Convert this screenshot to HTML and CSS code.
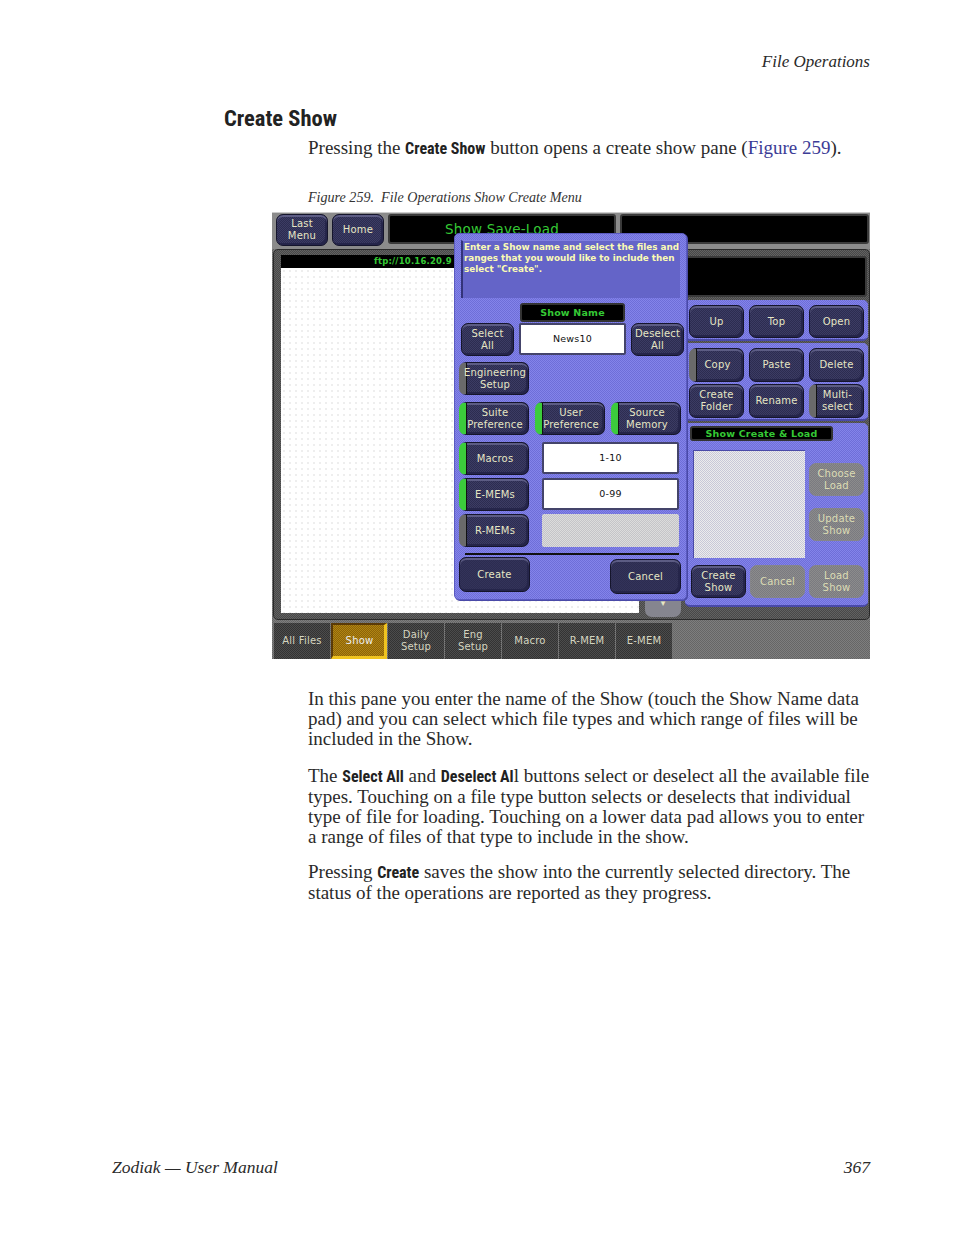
FILE: index.html
```html
<!DOCTYPE html>
<html lang="en">
<head>
<meta charset="utf-8">
<title>Create Show</title>
<link rel="stylesheet" href="styles.css">
</head>
<body>
<div class="page">
  <header class="running">File Operations</header>
  <h1>Create Show</h1>
  <p class="intro">Pressing the <b>Create Show</b> button opens a create show pane (<a>Figure 259</a>).</p>
  <p class="caption">Figure 259.&nbsp; File Operations Show Create Menu</p>

  <div class="shot">
    <div class="topbar">
      <div class="btn b-top">Last<br>Menu</div>
      <div class="btn b-home">Home</div>
      <div class="blackbox title">Show Save-Load</div>
      <div class="blackbox spare"></div>
    </div>

    <div class="main">
      <div class="files">
        <div class="path">ftp://10.16.20.9</div>
        <div class="list"></div>
      </div>
      <div class="side">
        <div class="blackbox status"></div>
        <div class="panel p-nav">
          <div class="btn b-r">Up</div>
          <div class="btn b-r">Top</div>
          <div class="btn b-r">Open</div>
        </div>
        <div class="panel p-ops">
          <div class="btn b-r lamp-grey">Copy</div>
          <div class="btn b-r">Paste</div>
          <div class="btn b-r">Delete</div>
          <div class="btn b-r">Create<br>Folder</div>
          <div class="btn b-r">Rename</div>
          <div class="btn b-r lamp-grey">Multi-<br>select</div>
        </div>
        <div class="panel p-show">
          <div class="tag tag-wide">Show Create &amp; Load</div>
          <div class="show-body">
            <div class="showlist"></div>
            <div class="show-actions">
              <div class="btn b-r off">Choose<br>Load</div>
              <div class="btn b-r off">Update<br>Show</div>
            </div>
          </div>
          <div class="show-foot">
            <div class="btn b-r">Create<br>Show</div>
            <div class="btn b-r off">Cancel</div>
            <div class="btn b-r off">Load<br>Show</div>
          </div>
        </div>
      </div>
      <div class="scroll-down">&#9662;</div>
    </div>

    <div class="tabs">
      <div class="tab">All Files</div>
      <div class="tab tab-on">Show</div>
      <div class="tab">Daily<br>Setup</div>
      <div class="tab">Eng<br>Setup</div>
      <div class="tab">Macro</div>
      <div class="tab">R-MEM</div>
      <div class="tab">E-MEM</div>
    </div>

    <div class="dialog">
      <div class="message">Enter a Show name and select the files and<br>ranges that you would like to include then<br>select "Create".</div>
      <div class="tag tag-name">Show Name</div>
      <div class="row r-name">
        <div class="btn b-sel">Select<br>All</div>
        <div class="field f-name">News10</div>
        <div class="btn b-sel">Deselect<br>All</div>
      </div>
      <div class="row r-eng">
        <div class="btn b-d lamp-grey">Engineering<br>Setup</div>
      </div>
      <div class="row r-pref">
        <div class="btn b-d lamp-green">Suite<br>Preference</div>
        <div class="btn b-d lamp-green">User<br>Preference</div>
        <div class="btn b-d lamp-green">Source<br>Memory</div>
      </div>
      <div class="row r-range r-macros">
        <div class="btn b-d lamp-green">Macros</div>
        <div class="field f-range">1-10</div>
      </div>
      <div class="row r-range">
        <div class="btn b-d lamp-green">E-MEMs</div>
        <div class="field f-range">0-99</div>
      </div>
      <div class="row r-range">
        <div class="btn b-d lamp-grey">R-MEMs</div>
        <div class="field f-range f-off"></div>
      </div>
      <div class="rule"></div>
      <div class="row r-foot">
        <div class="btn b-foot">Create</div>
        <div class="btn b-foot b-cancel">Cancel</div>
      </div>
    </div>
  </div>

  <div class="copy">
    <p>In this pane you enter the name of the Show (touch the Show Name data<br>pad) and you can select which file types and which range of files will be<br>included in the Show.</p>
    <p>The <b>Select All</b> and <b>Deselect Al</b>l buttons select or deselect all the available file<br>types. Touching on a file type button selects or deselects that individual<br>type of file for loading. Touching on a lower data pad allows you to enter<br>a range of files of that type to include in the show.</p>
    <p>Pressing <b>Create</b> saves the show into the currently selected directory. The<br>status of the operations are reported as they progress.</p>
  </div>

  <footer class="foot">
    <span>Zodiak — User Manual</span>
    <span>367</span>
  </footer>
</div>
</body>
</html>
```
FILE: styles.css
```css
* { box-sizing: border-box; }
html, body { margin: 0; background: #fff; }
.page {
  width: 954px; height: 1235px; padding: 52px 84px 0 112px;
  display: flex; flex-direction: column;
  font-family: "Liberation Serif", serif; color: #2a2a2a;
  font-size: 19px; line-height: 20px; white-space: nowrap;
}
.page b {
  font-family: "Roboto", "Liberation Sans", sans-serif; font-stretch: 75%;
  font-weight: 700; font-size: 16px; color: #222;
}
.running { text-align: right; font-style: italic; font-size: 17px; }
h1 {
  margin: 33px 0 0 112px; font: 700 22.5px/26px "Roboto", "Liberation Sans", sans-serif;
  font-stretch: 75%; color: #222;
}
.intro { margin: 7px 0 0 196px; }
.intro a { color: #3c3c96; }
.caption { margin: 29px 0 0 196px; font-style: italic; font-size: 14.1px; line-height: 18px; color: #333; }

/* screenshot */
.shot {
  position: relative; width: 598px; height: 447px; margin: 6px 0 0 160px;
  background-color: #7e7e7e;
  background-image: conic-gradient(#666 25%, transparent 0 50%, #666 0 75%, transparent 0);
  background-size: 2px 2px;
  font-family: "DejaVu Sans", sans-serif; font-size: 10px; line-height: 12px;
  color: #e6e6c4; letter-spacing: .2px;
  border-top: 1px solid #ccc;
}
.btn {
  display: flex; align-items: center; justify-content: center; text-align: center;
  background-color: #3c3c64;
  background-image: conic-gradient(#2c2c50 25%, transparent 0 50%, #2c2c50 0 75%, transparent 0);
  background-size: 2px 2px;
  border: 1px solid #15152c; border-radius: 7px;
  box-shadow: inset 0 2px 0 #5c5c84, inset -2px -2px 0 #25254a;
}
.off {
  background-color: #8c8c8c; border-color: #85858a; box-shadow: none; color: #dcdcb4;
  background-image: conic-gradient(#7a7a80 25%, transparent 0 50%, #7a7a80 0 75%, transparent 0);
}
.lamp-green, .lamp-grey {
  padding-right: 4px;
  box-shadow: inset 1px 0 0 #111, inset 0 2px 0 #5c5c84, inset -2px -2px 0 #25254a;
}
.lamp-green { border-left: 7px solid #3ccb3c; }
.lamp-grey { border-left: 7px solid #6a6a6a; }

.topbar { display: flex; height: 36px; padding: 1px 0 0 4px; background: #8b8b8b; }
.b-top { width: 52px; height: 32px; }
.b-home { width: 52px; height: 32px; margin-left: 4px; }
.blackbox { background: #000; border: 2px solid #3a3a3a; border-radius: 3px; }
.title {
  width: 228px; height: 30px; margin-left: 4px; color: #35c935;
  font-size: 13.5px; text-align: center; padding-top: 5px; line-height: 16px;
}
.spare { width: 249px; height: 30px; margin-left: 4px; }

.main {
  position: relative; display: flex; height: 371px; margin-left: 1px;
  background-color: #626262;
  background-image: conic-gradient(#484848 25%, transparent 0 50%, #484848 0 75%, transparent 0);
  background-size: 2px 2px;
  border-radius: 5px; border: 1px solid #2a2a2a;
  padding: 5px 0 0 7px;
}
.files { width: 358px; height: 358px; }
.path {
  height: 13px; background: #000; color: #35c935; font-weight: 700; font-size: 8.5px; line-height: 13px;
  padding-left: 93px;
}
.list {
  height: 345px; background-color: #fff;
  background-image: radial-gradient(#eeeeee .9px, transparent 1px);
  background-size: 6px 6px;
}
.side { width: 183px; margin-left: 46px; display: flex; flex-direction: column; margin-top: 1px; }
.status { height: 41px; width: 182px; }
.panel, .dialog {
  background-color: #8484ea;
  background-image: conic-gradient(#6e6ed8 25%, transparent 0 50%, #6e6ed8 0 75%, transparent 0);
  background-size: 2px 2px;
}
.panel { border-radius: 5px; border-bottom: 2px solid #4a4aa8; }
.b-r { width: 55px; height: 33px; }
.p-nav {
  height: 41px; margin-top: 3px; padding: 5px 5px 0 4px;
  display: grid; grid-template-columns: repeat(3, 55px); column-gap: 5px;
}
.p-ops {
  height: 78px; margin-top: 2px; padding: 5px 5px 0 4px;
  display: grid; grid-template-columns: repeat(3, 55px); column-gap: 5px; row-gap: 3px; grid-auto-rows: 33px;
}
.p-ops .btn { height: 34px; }
.p-show { height: 184px; margin-top: 2px; padding: 3px 4px 0 5px; }
.tag {
  background: #000; color: #35c935; border: 2px solid #333; border-radius: 3px;
  font-weight: 700; font-size: 9.5px; line-height: 11px; text-align: center;
}
.tag-wide { width: 143px; height: 15px; }
.show-body { display: flex; margin-top: 9px; padding-left: 3px; }
.showlist {
  width: 112px; height: 108px; background-color: #ececec;
  background-image: conic-gradient(#c8c8d8 25%, transparent 0 50%, #c8c8d8 0 75%, transparent 0);
  background-size: 2px 2px;
  border-left: 1px solid #4a4aa8; border-top: 1px solid #4a4aa8;
}
.show-actions { margin-left: 4px; padding-top: 13px; display: flex; flex-direction: column; gap: 12px; }
.show-foot { display: grid; grid-template-columns: repeat(3, 55px); column-gap: 4px; margin-top: 7px; padding-left: 1px; }
.scroll-down {
  position: absolute; left: 371px; bottom: 2px; width: 36px; height: 18px;
  background: #85858f; border-radius: 0 0 7px 7px; text-align: center; font-size: 9px; line-height: 8px;
}

.tabs { display: flex; gap: 1px; height: 36px; margin-top: 3px; padding-left: 2px; }
.tab {
  width: 56px; display: flex; align-items: center; justify-content: center; text-align: center;
  background-color: #4c4c4c;
  background-image: conic-gradient(#333 25%, transparent 0 50%, #333 0 75%, transparent 0);
  background-size: 2px 2px;
  color: #d5d5c0;
}
.tab-on {
  background-color: #b08414;
  background-image: conic-gradient(#8c6408 25%, transparent 0 50%, #8c6408 0 75%, transparent 0);
  padding-left: 2px;
  border-right: 3px solid #f0c420; border-bottom: 3px solid #f0c420;
  border-top: 2px solid #5a3a08; border-left: 2px solid #5a3a08; color: #eee;
}

/* dialog over the screen */
.dialog {
  position: absolute; left: 182px; top: 20px; width: 233px; height: 367px;
  border: 1px solid #5a5ac0; border-radius: 5px;
  box-shadow: 1px 1px 0 #4a4aa8;
  padding: 6px 0 0 3px;
}
.message {
  width: 219px; height: 58px; margin-left: 3px; padding: 1px 0 0 1px;
  background: #6464c8; border-left: 2px solid #33337a; border-top: 1px solid #8080e0;
  color: #fbfbb4; font-weight: 700; font-size: 8.8px; line-height: 11px; letter-spacing: 0;
}
.tag-name { width: 105px; height: 19px; margin: 5px 0 0 62px; line-height: 15px; }
.row { display: flex; }
.r-name { margin-top: 1px; gap: 5px; padding-left: 3px; }
.b-sel { width: 53px; height: 33px; }
.field {
  display: flex; align-items: center; justify-content: center;
  background: #fff; color: #111; border: 2px solid #44446a; border-radius: 2px;
  font-size: 9.5px;
}
.f-name { width: 107px; height: 32px; }
.b-d { width: 70px; height: 33px; }
.r-eng { margin-top: 6px; }
.r-pref { margin-top: 7px; gap: 6px; padding-left: 1px; }
.r-eng, .r-range { padding-left: 1px; }
.r-range { margin-top: 3px; gap: 13px; }
.r-macros { margin-top: 7px; }
.f-range { width: 137px; height: 32px; }
.f-off {
  height: 33px; border: 0; background-color: #dcdcdc;
  background-image: conic-gradient(#c4c4c8 25%, transparent 0 50%, #c4c4c8 0 75%, transparent 0);
  background-size: 2px 2px;
}
.rule { width: 214px; height: 2px; margin: 6px 0 0 7px; background: #111; }
.r-foot { margin-top: 2px; padding-left: 1px; justify-content: space-between; width: 223px; }
.b-foot { width: 71px; height: 35px; background-color: #33335a; }
.b-cancel { margin-top: 2px; }

.copy { margin: 30px 0 0 196px; }
.copy p { margin: 0 0 17px; }
.copy p:nth-child(2) { margin-bottom: 15px; }
.copy p:last-child { margin: 0; }

.foot {
  margin-top: auto; margin-bottom: 58px; display: flex; justify-content: space-between;
  font-style: italic; font-size: 17.5px;
}
```
